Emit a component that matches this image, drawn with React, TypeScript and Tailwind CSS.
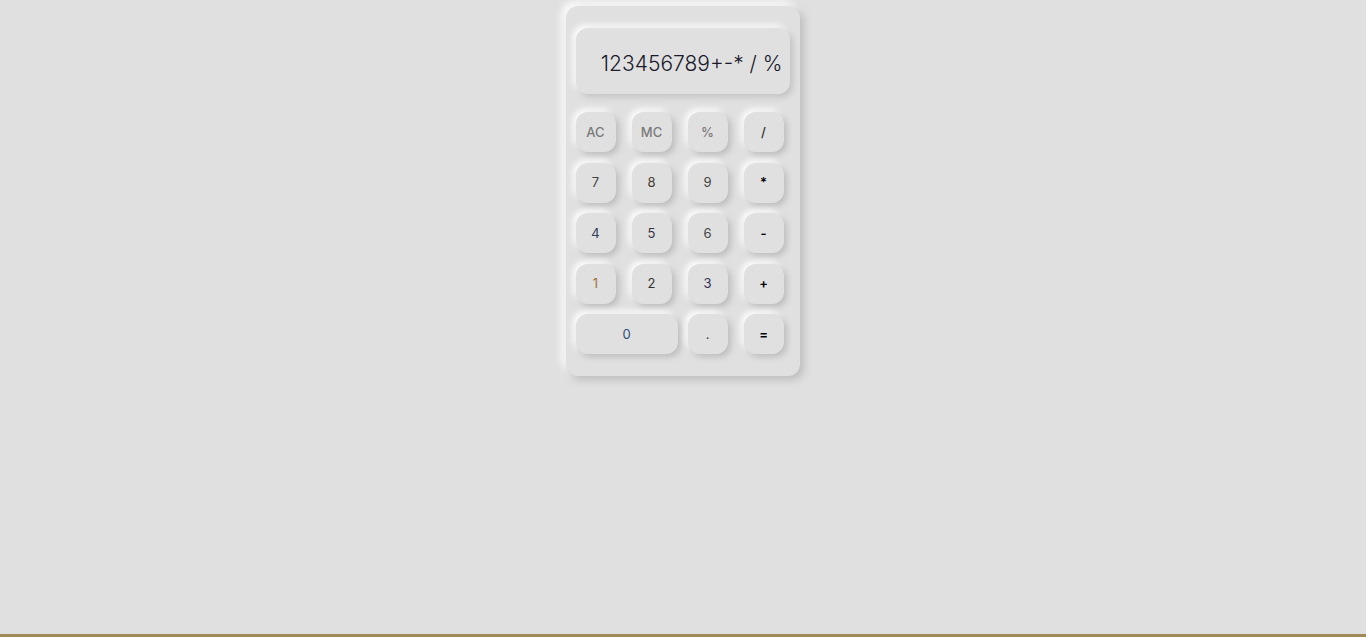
import React from 'react';

const keys: { label: string; cls: string; wide?: boolean }[] = [
  { label: 'AC', cls: 'text-[#7a7a7a] font-medium' },
  { label: 'MC', cls: 'text-[#7a7a7a] font-medium' },
  { label: '%', cls: 'text-[#7a7a7a] font-medium' },
  { label: '/', cls: 'text-[#333] font-medium' },
  { label: '7', cls: 'text-[#444]' },
  { label: '8', cls: 'text-[#4a3a30]' },
  { label: '9', cls: 'text-[#444]' },
  { label: '*', cls: 'text-black font-semibold' },
  { label: '4', cls: 'text-[#2f3f55]' },
  { label: '5', cls: 'text-[#3a3040]' },
  { label: '6', cls: 'text-[#444]' },
  { label: '-', cls: 'text-black font-semibold' },
  { label: '1', cls: 'text-[#a0703a]' },
  { label: '2', cls: 'text-[#333]' },
  { label: '3', cls: 'text-[#2f2f55]' },
  { label: '+', cls: 'text-black font-semibold' },
  { label: '0', cls: 'text-[#2f4f7a]', wide: true },
  { label: '.', cls: 'text-[#444]' },
  { label: '=', cls: 'text-black font-semibold' },
];

export default function App() {
  return (
    <div
      className="min-h-[637px] flex flex-col bg-[#e0e0e0]"
      style={{ fontFamily: 'Inter, "DejaVu Sans", sans-serif' }}
    >
      <div className="flex-1 flex justify-center pt-[6px]">
        <div className="w-[234px] h-[370px] rounded-[12px] bg-[#e0e0e0] px-[10px] pt-[22px] shadow-[4px_4px_8px_#bdbdbd,-4px_-4px_8px_#ffffff] ml-[-1px]">
          <div className="h-[66px] rounded-[12px] bg-[#e0e0e0] flex items-center justify-end pr-[7px] pt-[6px] shadow-[3px_3px_6px_#c2c2c2,-3px_-3px_6px_#ffffff]">
            <span className="text-[21px] tracking-[0px] text-[#1a1a2a] font-light">123456789+-* / %</span>
          </div>
          <div className="grid grid-cols-[40px_40px_40px_40px] gap-x-[16px] gap-y-[10.5px] mt-[18px]">
            {keys.map((k) => (
              <button
                key={k.label}
                className={`h-[40px] rounded-[12px] bg-[#e0e0e0] flex items-center justify-center pt-[1px] text-[13px] shadow-[3px_3px_6px_#bcbcbc,-3px_-3px_6px_#ffffff] ${k.wide ? 'col-span-2 w-[102px]' : ''} ${k.cls}`}
              >
                {k.label}
              </button>
            ))}
          </div>
        </div>
      </div>
      <div className="h-[3px] bg-[#a08a58]" />
    </div>
  );
}
